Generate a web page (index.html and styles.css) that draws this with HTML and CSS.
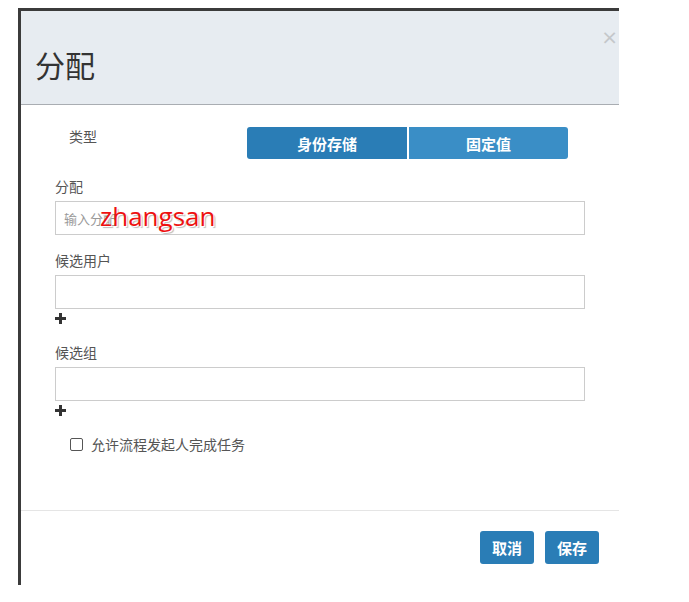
FILE: index.html
```html
<!DOCTYPE html>
<html lang="zh">
<head>
<meta charset="utf-8">
<link rel="stylesheet" href="styles.css">
</head>
<body>
<div class="panel">
  <div class="header">
    <h1 class="title">分配</h1>
    <span class="close">×</span>
  </div>
  <div class="body">
    <div class="type-row">
      <span class="type-label">类型</span>
      <div class="btn-group">
        <button class="seg seg-active">身份存储</button>
        <button class="seg seg-light">固定值</button>
      </div>
    </div>
    <div class="field">
      <label class="label">分配</label>
      <div class="input-wrap">
        <div class="input"><span class="placeholder">输入分配</span></div>
        <span class="overlay">zhangsan</span>
      </div>
    </div>
    <div class="field">
      <label class="label">候选用户</label>
      <div class="input"></div>
      <svg class="plus" width="11" height="11" viewBox="0 0 11 11"><rect x="4" y="0" width="3" height="11"/><rect x="0" y="4" width="11" height="3"/></svg>
    </div>
    <div class="field">
      <label class="label">候选组</label>
      <div class="input"></div>
      <svg class="plus" width="11" height="11" viewBox="0 0 11 11"><rect x="4" y="0" width="3" height="11"/><rect x="0" y="4" width="11" height="3"/></svg>
    </div>
    <div class="check-row">
      <span class="checkbox"></span>
      <span class="check-label">允许流程发起人完成任务</span>
    </div>
  </div>
  <div class="footer">
    <button class="btn">取消</button>
    <button class="btn">保存</button>
  </div>
</div>
</body>
</html>
```
FILE: styles.css
```css
html, body {
  margin: 0;
  padding: 0;
  background: #fff;
  font-family: "Noto Sans CJK SC", "Noto Sans", sans-serif;
  color: #333;
}
.panel {
  margin: 8px 0 0 18px;
  width: 598px;
  height: 574px;
  border-left: 3px solid #3b3b3b;
  border-top: 3px solid #3b3b3b;
  display: flex;
  flex-direction: column;
  background: #fff;
}
.header {
  height: 94px;
  flex: none;
  background: #e7ecf1;
  border-bottom: 1px solid #a9adb2;
  display: flex;
  align-items: flex-start;
  justify-content: space-between;
  box-sizing: border-box;
  padding: 0 0 0 14px;
}
.title {
  margin: 33px 0 0 0;
  font-size: 30px;
  font-weight: normal;
  line-height: 40px;
  color: #333;
}
.close {
  margin: 16px 1px 0 0;
  font-size: 20px;
  line-height: 20px;
  color: #c4c7ca;
  font-family: "DejaVu Sans", sans-serif;
}
.body {
  padding: 22px 0 0 34px;
  flex: 1;
}
.type-row {
  display: flex;
  align-items: flex-start;
  height: 49px;
}
.type-label {
  margin: 0 0 0 14px;
  font-size: 14px;
  line-height: 18px;
  color: #555;
  width: 178px;
}
.btn-group {
  display: flex;
  gap: 2px;
}
.seg {
  height: 32px;
  border: none;
  color: #fff;
  font-family: "Noto Sans CJK SC", sans-serif;
  font-size: 15px;
  font-weight: bold;
  padding: 0;
}
.seg-active {
  width: 160px;
  background: #2a7db6;
  border-radius: 3px 0 0 3px;
}
.seg-light {
  width: 159px;
  background: #3a8ec6;
  border-radius: 0 3px 3px 0;
}
.field {
  display: flex;
  flex-direction: column;
  align-items: flex-start;
}
.label {
  font-size: 14px;
  line-height: 20px;
  color: #555;
  margin-bottom: 5px;
}
.input-wrap {
  position: relative;
  margin-bottom: 15px;
}
.input {
  width: 530px;
  height: 34px;
  box-sizing: border-box;
  border: 1px solid #ccc;
  background: #fff;
  display: flex;
  align-items: center;
  padding-left: 8px;
}
.placeholder {
  font-size: 13px;
  color: #999;
}
.overlay {
  position: absolute;
  left: 45px;
  top: -2px;
  font-family: "Open Sans", "Noto Sans", sans-serif;
  font-size: 26px;
  color: #ee1111;
  text-shadow: 1px 1px 0 #fff, 2px 2px 1px #bbb;
  line-height: 34px;
}
.plus {
  fill: #333;
  margin: 4px 0 18px 0;
  display: block;
}
.check-row {
  display: flex;
  align-items: center;
  height: 20px;
  margin: 0 0 0 15px;
}
.checkbox {
  width: 11px;
  height: 11px;
  border: 1px solid #555;
  border-radius: 2px;
  margin-right: 8px;
}
.check-label {
  font-size: 14px;
  color: #555;
  line-height: 20px;
}
.footer {
  flex: none;
  border-top: 1px solid #e5e5e5;
  height: 75px;
  display: flex;
  justify-content: flex-end;
  align-items: flex-start;
  gap: 11px;
  padding: 20px 20px 0 0;
  box-sizing: border-box;
}
.btn {
  width: 54px;
  height: 33px;
  border: none;
  border-radius: 3px;
  background: #2a7db6;
  color: #fff;
  font-family: "Noto Sans CJK SC", sans-serif;
  font-size: 15px;
  font-weight: bold;
  padding: 0;
}
```
